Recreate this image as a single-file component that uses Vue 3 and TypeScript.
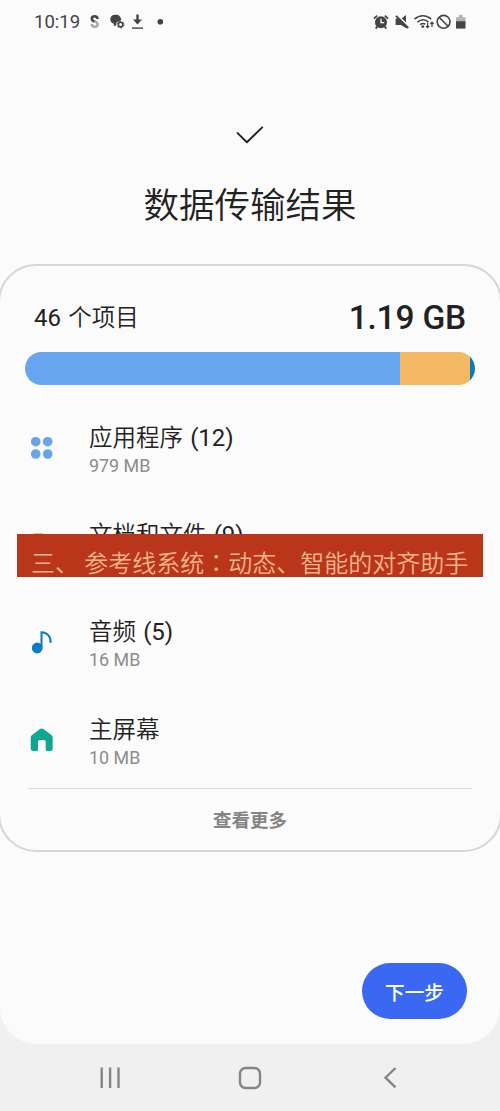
<script setup lang="ts">
type IconName = 'apps' | 'folder' | 'audio' | 'home'

interface TransferItem {
  icon: IconName
  label: string
  count?: number
  size: string
}

interface Segment {
  name: string
  percent: number
}

const items: TransferItem[] = [
  { icon: 'apps', label: '应用程序', count: 12, size: '979 MB' },
  { icon: 'folder', label: '文档和文件', count: 9, size: '' },
  { icon: 'audio', label: '音频', count: 5, size: '16 MB' },
  { icon: 'home', label: '主屏幕', size: '10 MB' },
]

const segments: Segment[] = [
  { name: 'apps', percent: 83.3 },
  { name: 'files', percent: 15.6 },
  { name: 'audio', percent: 1.1 },
]
</script>

<template>
  <div class="phone">
    <div class="screen">
      <header class="status">
        <span class="time">10:19</span>
        <svg class="status-left" width="80" height="20" viewBox="0 0 80 20" fill="none">
          <path d="M10.6 7C10.4 5 9.2 4.2 7.6 4.2C5.8 4.2 4.8 5.2 4.8 6.7C4.8 8.5 6 9 7.8 9.6" stroke="#444" stroke-width="2.5" />
          <path d="M7.4 9.2C9.5 9.8 10.6 10.6 10.6 12.2C10.6 13.9 9.4 14.7 7.7 14.7C6 14.7 4.9 13.9 4.7 12" stroke="#aaa" stroke-width="2.5" />
          <path d="M29 2.8A5 5 0 0 1 34.2 7.8L33 9L29.5 10.5L29 13.7H26.8V11.8A4.6 4.6 0 0 1 29 2.8Z" fill="#444" />
          <circle cx="33.6" cy="12.6" r="2.3" stroke="#444" stroke-width="1.6" />
          <circle cx="33.6" cy="12.6" r="3.4" stroke="#444" stroke-width="1" stroke-dasharray="1.8 1.76" />
          <path d="M50.5 2.5V10" stroke="#444" stroke-width="2.4" />
          <path d="M46 7.4H55L50.5 12.4Z" fill="#444" />
          <path d="M45 16.1H56" stroke="#444" stroke-width="1.4" />
          <circle cx="73.3" cy="9.8" r="2.8" fill="#444" />
        </svg>
        <svg class="status-right" width="98" height="20" viewBox="0 0 98 20" fill="none">
          <circle cx="9" cy="10.2" r="6" fill="#444" />
          <path d="M1.9 6.7L5.2 3.7M12.8 3.7L16.1 6.7M5.2 14.6L3.7 16.6M12.8 14.6L14.3 16.6" stroke="#444" stroke-width="1.8" />
          <path d="M9 6.7V10.6H12.2" stroke="#fff" stroke-width="1.3" />
          <path d="M23.6 6.4H27.2L34.6 13.8V16.4L29.2 13H23.6ZM29.8 6.2L34 3V10.4Z" fill="#444" />
          <path d="M24 3.8L36.2 16" stroke="#444" stroke-width="1.9" />
          <path d="M42.6 7.1C47.4 2.6 54.4 2.6 59.2 7.1M45.4 10.1C49 7.2 53.2 7.2 56.5 10.1M48.2 12.7C50 11.3 51.8 11.3 53.3 12.2" stroke="#444" stroke-width="1.6" />
          <circle cx="50.8" cy="14.6" r="1.4" fill="#444" />
          <path d="M55.6 10.8V15.5M54 14L55.6 15.7L57.2 14M60 15V10.5M58.4 12L60 10.2L61.6 12" stroke="#444" stroke-width="1.2" />
          <circle cx="71.6" cy="9.8" r="6.4" stroke="#444" stroke-width="1.6" />
          <path d="M67.1 5.3L76.1 14.3" stroke="#444" stroke-width="1.6" />
          <path d="M84 9.4V5.3H86.8V3H90.7V5.3H93.5V9.4Z" fill="#b4b4b4" />
          <path d="M84 9.2H93.5V16.6H84Z" fill="#444" />
        </svg>
      </header>

      <section class="hero">
        <svg class="check" width="30" height="20" viewBox="0 0 30 20" fill="none">
          <path d="M2.6 8.1L11.9 17.2L27.2 2.4" stroke="#222" stroke-width="1.9" stroke-linecap="round" stroke-linejoin="round" />
        </svg>
        <h1 class="title">数据传输结果</h1>
      </section>

      <main class="card">
        <div class="summary">
          <span class="total-items"><span class="latin">46</span> 个项目</span>
          <span class="total-size">1.19 GB</span>
        </div>
        <div class="bar">
          <div
            v-for="s in segments"
            :key="s.name"
            :class="['segment', s.name]"
            :style="{ width: s.percent + '%' }"
          ></div>
        </div>
        <ul class="list">
          <li v-for="item in items" :key="item.icon" class="row">
            <svg class="row-icon" width="28" height="28" viewBox="0 0 28 28" fill="none">
              <g v-if="item.icon === 'apps'" fill="#68a4ee">
                <circle cx="7.7" cy="7.7" r="4.8" />
                <circle cx="19.7" cy="7.7" r="4.8" />
                <circle cx="7.7" cy="20" r="4.8" />
                <circle cx="19.7" cy="20" r="4.8" />
              </g>
              <path v-else-if="item.icon === 'folder'" d="M3 7Q3 2 8 2H13Q17 2 17 5.5H22Q25 5.5 25 8.5V22Q25 25 22 25H6Q3 25 3 22Z" fill="#f4b860" />
              <g v-else-if="item.icon === 'audio'">
                <circle cx="9.2" cy="20" r="5.4" fill="#0b7cc4" />
                <path d="M13.5 20V4.2C19.4 4.6 23.2 8.8 22.5 14.9" stroke="#0b7cc4" stroke-width="2" />
              </g>
              <path v-else d="M11.8 3.2Q13.8 1.7 15.8 3.2L23.4 9Q24.7 10 24.7 11.7V22.3Q24.7 25 22.2 25H19.4Q17.7 25 17.7 23.4V16Q17.7 14 15.7 14H12Q10 14 10 16V23.4Q10 25 8.2 25H5.4Q2.7 25 2.7 22.3V11.7Q2.7 10 4 9Z" fill="#0ea892" />
            </svg>
            <div class="row-text">
              <div class="row-label">{{ item.label }}<span v-if="item.count" class="latin"> ({{ item.count }})</span></div>
              <div class="row-size">{{ item.size }}</div>
            </div>
          </li>
        </ul>
        <button class="more" type="button">查看更多</button>
      </main>

      <footer class="actions">
        <button class="next" type="button">下一步</button>
      </footer>

      <div class="banner">三、 参考线系统<span class="colon">：</span>动态、智能的对齐助手</div>
    </div>

    <nav class="nav">
      <svg width="24" height="24" viewBox="0 0 24 24" stroke="#858585" stroke-width="2.4">
        <path d="M3.7 1.6V22M12.1 1.6V22M20.5 1.6V22" />
      </svg>
      <svg width="24" height="24" viewBox="0 0 24 24" fill="none" stroke="#858585" stroke-width="2.4">
        <rect x="2" y="2" width="20" height="20" rx="5.6" />
      </svg>
      <svg width="24" height="24" viewBox="0 0 24 24" fill="none" stroke="#858585" stroke-width="2.4">
        <path d="M17.5 2L7.5 11.7L17.5 21.4" />
      </svg>
    </nav>
  </div>
</template>

<style>
body {
  margin: 0;
  background: #f0f0f0;
}
</style>

<style scoped>
.phone {
  width: 500px;
  height: 1111px;
  overflow: hidden;
  display: flex;
  flex-direction: column;
  background: #f0f0f0;
  color: #222;
  font-family: Roboto, 'Noto Sans CJK SC', sans-serif;
}

.screen {
  position: relative;
  box-sizing: border-box;
  height: 1044px;
  display: flex;
  flex-direction: column;
  background: #fbfbfb;
  border-radius: 0 0 37px 37px;
}

.status {
  display: flex;
  align-items: center;
  height: 44px;
  padding: 0 30px 0 34px;
}

.time {
  width: 53px;
  font-size: 18.5px;
  line-height: 44px;
  color: #444;
}

.status-right {
  margin-left: auto;
}

.hero {
  display: flex;
  flex-direction: column;
  align-items: center;
  height: 220px;
}

.check {
  margin-top: 81px;
}

.title {
  margin: 35px 0 0;
  font-size: 35.5px;
  font-weight: 350;
  line-height: 52px;
}

.card {
  box-sizing: border-box;
  height: 588px;
  margin: 0 -2px;
  padding: 0 26px;
  border: 2px solid #d6d6d6;
  border-radius: 38px;
}

.summary {
  display: flex;
  justify-content: space-between;
  align-items: center;
  height: 86px;
  padding: 17px 8px 0 8px;
  box-sizing: border-box;
}

.total-items {
  padding-bottom: 3px;
  font-size: 23.5px;
  font-weight: 350;
  word-spacing: 1.6px;
}

.latin {
  font-size: 24px;
  font-weight: 400;
}

.total-size {
  font-size: 33.5px;
  font-weight: 500;
  letter-spacing: -0.2px;
}

.bar {
  display: flex;
  height: 33px;
  margin: 0 -1px;
  border-radius: 17px;
  overflow: hidden;
}

.segment.apps {
  background: #68a5ef;
}

.segment.files {
  background: #f3ba63;
}

.segment.audio {
  background: #087bb9;
}

.list {
  list-style: none;
  margin: 14px 0 0;
  padding: 0;
}

.row {
  display: flex;
  align-items: center;
  height: 97.3px;
}

.row-icon {
  flex: none;
  margin: 0 33px 0 2px;
}

.row-text {
  padding-top: 3px;
}

.row-label {
  height: 34px;
  font-size: 23.5px;
  font-weight: 350;
  line-height: 34px;
  white-space: pre;
  word-spacing: 1.2px;
}

.row-size {
  height: 23px;
  font-size: 17.9px;
  line-height: 22px;
  color: #8c8c8c;
}

.more {
  display: block;
  width: calc(100% - 4px);
  height: 61px;
  margin: 0 2px;
  padding: 0;
  border: 0;
  border-top: 1px solid #ddd;
  background: none;
  font-family: inherit;
  font-size: 18.5px;
  font-weight: 700;
  color: #858585;
}

.actions {
  display: flex;
  justify-content: flex-end;
  margin-top: 111px;
  padding-right: 33px;
}

.next {
  width: 105px;
  height: 56px;
  padding: 0;
  border: 0;
  border-radius: 28px;
  background: #3b68f2;
  color: #fff;
  font-family: inherit;
  font-size: 19.6px;
  font-weight: 500;
}

.banner {
  position: absolute;
  top: 534px;
  left: 17px;
  width: 466px;
  height: 43px;
  box-sizing: border-box;
  padding: 13px 0 0 14px;
  background: #b9361a;
  color: #f8b48c;
  font-family: 'Noto Sans CJK SC', sans-serif;
  font-size: 24px;
  font-weight: 350;
  line-height: 30px;
  white-space: pre;
}

.colon {
  font-family: 'Noto Sans CJK JP', sans-serif;
}

.nav {
  display: flex;
  align-items: center;
  justify-content: space-between;
  height: 67px;
  padding: 0 98px;
}
</style>
